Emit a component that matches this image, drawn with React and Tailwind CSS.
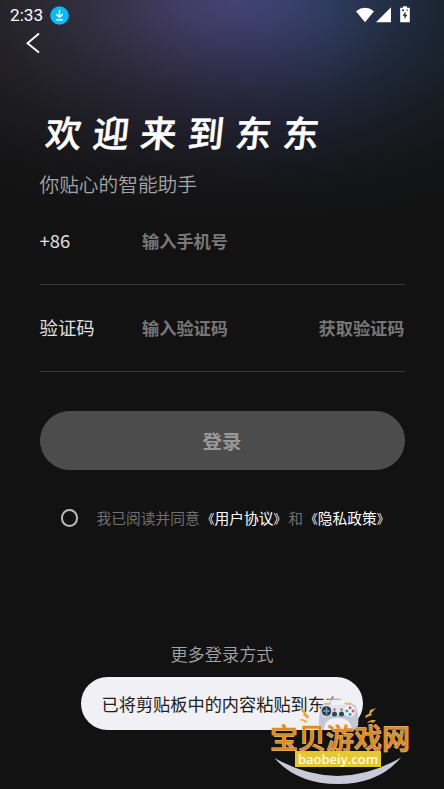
const StatusBar = () => (
  <div className="flex h-[30px] items-center justify-between pl-[10px] pr-[33px]">
    <div className="flex items-center gap-[7px]">
      <span className="font-[Roboto] text-[17.200px] leading-[30px] text-white">2:33</span>
      <svg className="h-[19px] w-[19px]" viewBox="0 0 19 19">
        <circle cx="9.5" cy="9.5" r="9.3" fill="#0ab8fb" />
        <path d="M9.5 4v7M6.3 8.2l3.2 3.1 3.2-3.1M6.2 13.7h6.6" fill="none" stroke="#fff" strokeWidth="1.5" />
      </svg>
    </div>
    <svg className="h-[18px] w-[56px]" viewBox="0 0 56 18" fill="#fff">
      <path d="M1 5.2Q10-1.500 19 5.2L10 16.2Z" />
      <path d="M36 1.2v15H21z" />
      <path d="M48 .2h4v1.6h2.8V16.2h-9.600V1.800H48z" />
      <path d="M47 3.500h2v1.500h-2zM51.500 3.500h1.500v1h-1.500zM50.500 5.500l-3 4.300h2v3.200l3-4.300h-2z" fill="#252b42" />
    </svg>
  </div>
);

const Field = ({ label, placeholder, action }) => (
  <div className="flex h-[87px] items-center border-b border-[#373737]">
    <span className="w-[102.500px] text-[18.400px] text-[#e0e0e0]">{label}</span>
    <span className="text-[17.200px] font-bold text-[#777]">{placeholder}</span>
    {action && <span className="ml-auto text-[17.200px] font-bold text-[#777]">{action}</span>}
  </div>
);

const DocLink = ({ title }) => (
  <span className="text-white">
    <span className="inline-flex w-[14.750px] justify-end pl-[3.500px] text-[12.500px]">《</span>
    {title}
    <span className="inline-flex w-[14.750px] justify-start text-[12.500px]">》</span>
  </span>
);

const Watermark = () => (
  <div className="absolute left-[264px] top-[696px] h-[93px] w-[152px]">
    <svg className="absolute inset-0 h-full w-full" viewBox="264 696 152 93">
      <defs>
        <filter id="glow" x="-50%" y="-50%" width="200%" height="200%">
          <feGaussianBlur stdDeviation="2" />
        </filter>
      </defs>
      <ellipse cx="338" cy="704" rx="15" ry="6" fill="#f1f0f5" filter="url(#glow)" />
      <path d="M274.500 758Q338 794 401 757.500Q379 784 338 784Q297 784 274.500 758Z" fill="#c9cad9" />
      <path d="M322 705q5-2 10 0h13q5-2 10 0c3 6 4 14 3 21l-4 4h-32l-3-4c0-7 0-15 3-21z" fill="#c3c6d3" />
      <path d="M324 730c1-9 5-12 14-12s13 4 14 12z" fill="#f1f0f5" />
      <path d="M324 705h28l2 8-2 4c-8-3-21-3-28 0l-3-5z" fill="#e2e3eb" />
      <path d="M324 703.500h7M344.500 703.500h7" stroke="#e4bd61" strokeWidth="1.500" />
      <circle cx="326.500" cy="711" r="4.800" fill="#24364b" />
      <path d="M326.500 707.500v7M323 711h7" stroke="#7da1b0" strokeWidth="1.600" />
      <circle cx="350" cy="711" r="5.500" fill="#f6f4f7" />
      <g fill="#254a5a">
        <circle cx="334.500" cy="714" r="2.500" />
        <circle cx="341.500" cy="714" r="2.500" />
      </g>
      <g fill="#1fa0b8">
        <circle cx="350" cy="714.200" r="1.500" />
        <circle cx="346.900" cy="711" r="1.500" />
      </g>
      <g fill="#d95562">
        <circle cx="334.500" cy="709.500" r="1.200" />
        <circle cx="341.500" cy="709.500" r="1.200" />
        <circle cx="350" cy="707.800" r="1.500" />
        <circle cx="353.100" cy="711" r="1.500" />
      </g>
      <g fill="#e7a82d">
        <path d="M299 708l6 2 1 4 3 2-1 3-5-4 1-2z" />
        <path d="M299 720l4-1 3 2 2-1-2 3-3-2z" />
        <path d="M376 708l-6 2-1 4-3 1-1 3 7-3-1-2z" />
        <path d="M376 720l-4 0-3 1-2 2 4-1 2 1z" />
      </g>
    </svg>
    <div className="absolute left-[6px] top-[27px] whitespace-nowrap text-[28px] leading-[28px] font-medium text-[#e08a25] [-webkit-text-stroke:1px_#efc793] [paint-order:stroke_fill]">
      宝贝游戏网
    </div>
    <div className="absolute left-[31px] top-[55px] flex h-[16px] w-[86px] items-center justify-center overflow-hidden bg-[#e5c82e] pb-px font-['Open_Sans'] text-[13px] leading-[14px] font-semibold text-[#fffbe0]">
      baobeiy.com
    </div>
  </div>
);

export default function App() {
  return (
    <div className="relative h-[789px] w-[444px] overflow-hidden bg-[#121212] bg-[radial-gradient(ellipse_480px_230px_at_235px_0px,#12121200_0%,#12121222_12%,#12121256_25%,#12121294_42%,#121212cb_62%,#121212f0_82%,#121212_100%),linear-gradient(90deg,#4c465a_0px,#4a4463_90px,#484270_190px,#434376_240px,#39497a_330px,#284160_444px)] font-['Noto_Sans_CJK_SC',sans-serif]">
      <StatusBar />
      <svg className="ml-[26px] mt-[2px] block h-[22px] w-[14px]" viewBox="0 0 14 22" fill="none" stroke="#fff" strokeWidth="1.900">
        <path d="M13 1.500L1.500 11.300 13 20.500" />
      </svg>

      <div className="px-[39.500px]">
        <h1 className="mt-[52px] ml-[6px] h-[50px] origin-center -skew-x-6 whitespace-nowrap text-[36px] leading-[50px] font-medium tracking-[11.500px] text-white [-webkit-text-stroke:0.5px_white]">
          欢迎来到东东
        </h1>
        <p className="mt-[13px] text-[19.700px] leading-[30px] font-[350] text-[#a4a4a4]">你贴心的智能助手</p>

        <div className="-mt-[1px]">
          <Field label="+86" placeholder="输入手机号" />
          <Field label="验证码" placeholder="输入验证码" action="获取验证码" />
        </div>

        <button className="mt-[39px] block h-[59px] w-full rounded-full bg-[#4c4c4c] text-[19.400px] font-bold text-[#999]">
          登录
        </button>

        <div className="mt-[36px] flex h-[24px] items-center pl-[21px] text-[14.750px]">
          <span className="h-[17.500px] w-[17.500px] rounded-full border-2 border-[#bbb]" />
          <p className="ml-[18.500px] whitespace-nowrap text-[#707070]">
            我已阅读并同意<DocLink title="用户协议" />和<DocLink title="隐私政策" />
          </p>
        </div>

        <p className="mt-[112px] text-center text-[17.200px] leading-[24px] font-[350] text-[#a4a4a4]">更多登录方式</p>
      </div>

      <div className="ml-[81px] mt-[11px] flex h-[53px] w-[281.500px] items-center rounded-full bg-[#f1f0f5] pl-[20.500px] text-[17.200px] whitespace-nowrap text-[#202020]">
        已将剪贴板中的内容粘贴到东东
      </div>
      <Watermark />
    </div>
  );
}
